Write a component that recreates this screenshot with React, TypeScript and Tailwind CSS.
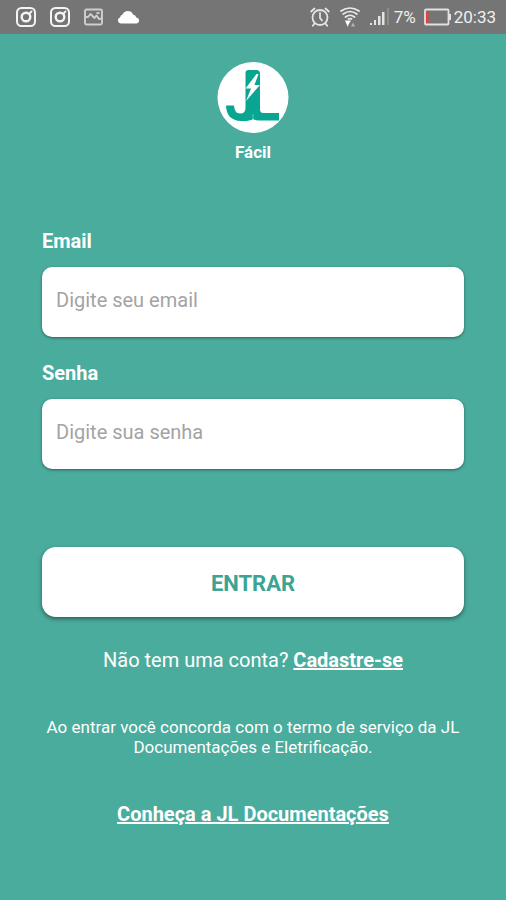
import React, { useState } from 'react';

const InstagramIcon = () => (
  <svg viewBox="0 0 20 20" className="h-5 w-5" fill="none" stroke="#f4f4f4" strokeWidth="2" aria-hidden="true">
    <rect x="1" y="1" width="18" height="18" rx="4.5" />
    <circle cx="10" cy="10" r="4.3" strokeWidth="2.4" />
    <path d="M13.5 6.5 15.5 4.5" strokeWidth="1.8" strokeLinecap="round" />
  </svg>
);

const PictureIcon = () => (
  <svg viewBox="0 0 20 18" className="h-[18px] w-5" fill="none" stroke="#cfcfcf" strokeWidth="1.9" strokeLinejoin="round" aria-hidden="true">
    <rect x="1" y="1.5" width="17" height="15" rx="1.5" />
    <path d="M1.5 9 4 9 6.5 6 10.5 10 12.5 7.5 15 11 17.5 10.5" />
    <path d="M12.5 5h3" />
  </svg>
);

const CloudIcon = () => (
  <svg viewBox="0 0 22 14" className="h-3.5 w-[22px]" fill="#fff" aria-hidden="true">
    <path d="M2.8 13.5A3.1 3.1 0 0 1 2 7.5 4 4 0 0 1 4.6 4.6 5.6 5.6 0 0 1 15 4.5 4 4 0 0 1 18.3 7.6 3 3 0 0 1 18.8 13.5Z" />
  </svg>
);

const AlarmIcon = () => (
  <svg viewBox="0 0 20 20" className="h-5 w-5" fill="none" stroke="#e4e4e4" strokeWidth="1.8" strokeLinecap="round" aria-hidden="true">
    <circle cx="10" cy="10.5" r="7.5" />
    <path d="M10 6v5l2 2.5M1.2 4.5 4.5 1.5M18.8 4.5 15.5 1.5M4.5 16.5 2.8 18.8M15.5 16.5 17.2 18.8" />
  </svg>
);

const WifiIcon = () => (
  <svg viewBox="0 0 20 20" className="h-5 w-5" fill="none" stroke="#ececec" strokeWidth="1.7" strokeLinecap="round" aria-hidden="true">
    <path d="M1 4Q10-2 19 4M3.2 7Q10 2 16.8 7M5.5 10Q10 6.5 14.5 10" />
    <path d="M8.5 12Q10 11 11.5 12" />
    <path d="M5 13.5h6L8.5 17.5 8 20 6.5 17Z" fill="#fff" stroke="none" />
    <path d="M11 19.5 13 15.5 15 19.5Z" fill="#b5b5b5" stroke="none" />
  </svg>
);

const SignalIcon = () => (
  <svg viewBox="0 0 20 18" className="h-[18px] w-5" fill="#e4e4e4" aria-hidden="true">
    <rect x="0" y="15" width="2" height="2" />
    <rect x="4" y="12" width="2" height="5" />
    <rect x="8" y="8" width="2.5" height="9" />
    <rect x="12" y="4" width="2.5" height="13" />
    <rect x="17" y="0" width="2" height="17" fill="#8d8d8d" />
  </svg>
);

const BatteryIcon = () => (
  <svg viewBox="0 0 28 18" className="h-[18px] w-7" aria-hidden="true">
    <rect x="1" y="1.5" width="23.5" height="15" rx="1" fill="none" stroke="#e2e2e2" strokeWidth="1.8" />
    <rect x="25" y="6" width="2" height="6" fill="#e2e2e2" />
    <rect x="2" y="3" width="2.5" height="12" fill="#e0443e" />
  </svg>
);

const Logo = () => (
  <svg viewBox="0 0 72 72" className="h-[72px] w-[72px]" role="img" aria-label="JL">
    <circle cx="36" cy="35.5" r="35.5" fill="#fff" />
    <path
      d="M31.5 8H39.5Q43 8 43 11.5V47.5Q43 51 46.5 51H62V58.5H42Q38.5 58.5 36 57Q32 59.5 24 59Q9.5 58.5 9 43.5H17Q17.5 51.5 23 51.5Q28.5 51.5 28.5 46V11Q28.5 8 31.5 8Z"
      fill="#08a690"
    />
    <path d="M39.5 12 28.5 26.5H34L29 39 43 23H37.5L41.5 12Z" fill="#fff" />
    <path d="M36 52V58" stroke="#7fcfc2" strokeWidth="0.8" />
  </svg>
);

const StatusBar = () => (
  <header className="flex h-[34px] items-center justify-between bg-[#757575] pr-2.5 pl-4">
    <div className="flex items-center gap-3.5">
      <InstagramIcon />
      <InstagramIcon />
      <PictureIcon />
      <CloudIcon />
    </div>
    <div className="flex items-center text-[17px] leading-5 text-[#f0f0f0]">
      <div className="mr-1 flex items-center gap-2.5">
        <AlarmIcon />
        <WifiIcon />
        <SignalIcon />
      </div>
      <span className="mr-2">7%</span>
      <BatteryIcon />
      <span className="ml-0.5">20:33</span>
    </div>
  </header>
);

interface FieldProps {
  id: string;
  label: string;
  type: string;
  placeholder: string;
  value: string;
  onChange: (value: string) => void;
}

const Field = ({ id, label, type, placeholder, value, onChange }: FieldProps) => (
  <div className="flex flex-col gap-3.5">
    <label htmlFor={id} className="text-[20px] leading-6 font-bold">{label}</label>
    <input
      id={id}
      type={type}
      placeholder={placeholder}
      value={value}
      onChange={(e) => onChange(e.target.value)}
      className="h-[70px] w-full rounded-[10px] bg-white px-3.5 pb-1 text-[20px] text-gray-800 shadow-[0_1px_3px_rgba(0,0,0,0.45)] outline-none placeholder:text-[#a3a3a3]"
    />
  </div>
);

export default function App() {
  const [email, setEmail] = useState('');
  const [senha, setSenha] = useState('');

  return (
    <div className="min-h-screen bg-[#4aac9d] font-['Roboto',sans-serif] text-white">
      <StatusBar />
      <main className="px-[42px] pt-7 pb-10">
        <div className="flex flex-col items-center gap-2">
          <Logo />
          <h1 className="text-[17px] leading-5 font-bold">Fácil</h1>
        </div>

        <form className="mt-[67px]" onSubmit={(e) => e.preventDefault()}>
          <div className="flex flex-col gap-6">
            <Field id="email" label="Email" type="email" placeholder="Digite seu email" value={email} onChange={setEmail} />
            <Field id="senha" label="Senha" type="password" placeholder="Digite sua senha" value={senha} onChange={setSenha} />
          </div>
          <button
            type="submit"
            className="mt-[78px] h-[70px] w-full rounded-[14px] bg-white pt-0.5 text-[22px] font-bold text-[#3da392] shadow-[0_2px_4px_rgba(0,0,0,0.45)]"
          >
            ENTRAR
          </button>
        </form>

        <div className="text-center">
          <p className="mt-[31px] text-[20px] leading-6">
            Não tem uma conta? <a href="#cadastro" className="font-bold underline">Cadastre-se</a>
          </p>
          <p className="mt-[45px] text-[17px] leading-5">
            Ao entrar você concorda com o termo de serviço da JL Documentações e Eletrificação.
          </p>
          <p className="mt-[45px] text-[20px] leading-6">
            <a href="#sobre" className="font-bold underline">Conheça a JL Documentações</a>
          </p>
        </div>
      </main>
    </div>
  );
}
